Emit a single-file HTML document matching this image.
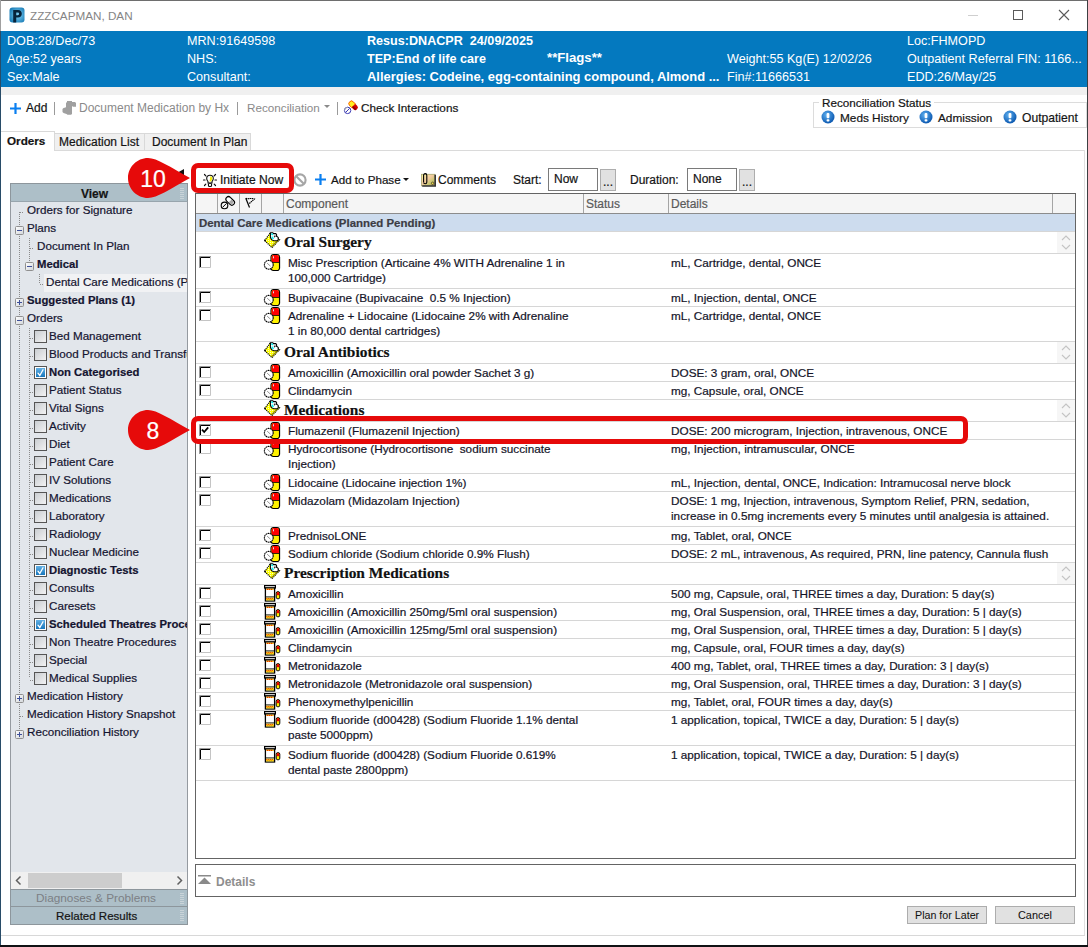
<!DOCTYPE html>
<html><head><meta charset="utf-8"><style>
html,body{margin:0;padding:0;width:1088px;height:947px;overflow:hidden;background:#fff}
body{position:relative;font-family:"Liberation Sans",sans-serif}
.t{position:absolute;white-space:nowrap;line-height:16px;font-family:"Liberation Sans",sans-serif;font-size:12px;-webkit-text-stroke:0.2px currentColor}
svg{overflow:visible}
</style></head><body>
<div style="position:absolute;left:0px;top:0px;width:1088px;height:947px;background:#fff"></div>
<div style="position:absolute;left:0px;top:0px;width:1088px;height:1px;background:#6e6e6e"></div>
<div style="position:absolute;left:0px;top:0px;width:1px;height:947px;background:#284c68"></div>
<div style="position:absolute;left:0px;top:0px;width:1px;height:31px;background:#a0a0a0"></div>
<div style="position:absolute;left:1087px;top:0px;width:1px;height:947px;background:#3c3f42"></div>
<div style="position:absolute;left:0px;top:945px;width:1088px;height:2px;background:#101214"></div>
<svg style="position:absolute;left:9px;top:7px;" width="16" height="16" viewBox="0 0 16 16"><defs><radialGradient id="pg" cx="55%" cy="50%" r="60%"><stop offset="0" stop-color="#7fd0f5"/><stop offset="1" stop-color="#1d7fb8"/></radialGradient></defs><rect x="0.5" y="0.5" width="15" height="15" rx="3" fill="url(#pg)"/><path d="M4.2 3h4.8c2.4 0 3.8 1.4 3.8 3.7S11.4 10.6 9 10.6H7.2v5H4.2z M7.2 5.4v2.9h1.6c0.9 0 1.3-0.6 1.3-1.45S9.7 5.4 8.8 5.4z" fill="#06223a"/></svg>
<div class="t" style="left:30px;top:8px;font-size:11.7px;color:#858585;font-family:'Liberation Sans', sans-serif;-webkit-text-stroke:0;">ZZZCAPMAN, DAN</div>
<div style="position:absolute;left:968px;top:15px;width:10px;height:1px;background:#cfcfcf"></div>
<div style="position:absolute;left:1013px;top:10px;width:10px;height:10px;border:1px solid #5a5a5a;box-sizing:border-box"></div>
<svg style="position:absolute;left:1058px;top:9px;" width="12" height="12" viewBox="0 0 12 12"><path d="M1 1L11 11M11 1L1 11" stroke="#5a5a5a" stroke-width="1.1"/></svg>
<div style="position:absolute;left:1px;top:31px;width:1086px;height:56px;background:#0479bf"></div>
<div class="t" style="left:7px;top:33px;font-size:12.6px;color:#ffffff;font-family:'Liberation Sans', sans-serif;-webkit-text-stroke:0;">DOB:28/Dec/73</div>
<div class="t" style="left:7px;top:51px;font-size:12.6px;color:#ffffff;font-family:'Liberation Sans', sans-serif;-webkit-text-stroke:0;">Age:52 years</div>
<div class="t" style="left:7px;top:69px;font-size:12.6px;color:#ffffff;font-family:'Liberation Sans', sans-serif;-webkit-text-stroke:0;">Sex:Male</div>
<div class="t" style="left:187px;top:33px;font-size:12.6px;color:#ffffff;font-family:'Liberation Sans', sans-serif;-webkit-text-stroke:0;">MRN:91649598</div>
<div class="t" style="left:187px;top:51px;font-size:12.6px;color:#ffffff;font-family:'Liberation Sans', sans-serif;-webkit-text-stroke:0;">NHS:</div>
<div class="t" style="left:187px;top:69px;font-size:12.6px;color:#ffffff;font-family:'Liberation Sans', sans-serif;-webkit-text-stroke:0;">Consultant:</div>
<div class="t" style="left:367px;top:33px;font-size:12.6px;font-weight:700;color:#ffffff;font-family:'Liberation Sans', sans-serif;-webkit-text-stroke:0;">Resus:DNACPR&nbsp; 24/09/2025</div>
<div class="t" style="left:367px;top:51px;font-size:12.6px;font-weight:700;color:#ffffff;font-family:'Liberation Sans', sans-serif;-webkit-text-stroke:0;">TEP:End of life care</div>
<div class="t" style="left:547px;top:50px;font-size:13.2px;font-weight:700;color:#ffffff;font-family:'Liberation Sans', sans-serif;-webkit-text-stroke:0;">**Flags**</div>
<div class="t" style="left:367px;top:69px;font-size:12.95px;font-weight:700;color:#ffffff;font-family:'Liberation Sans', sans-serif;-webkit-text-stroke:0;">Allergies: Codeine, egg-containing compound, Almond ...</div>
<div class="t" style="left:727px;top:51px;font-size:12.6px;color:#ffffff;font-family:'Liberation Sans', sans-serif;-webkit-text-stroke:0;">Weight:55 Kg(E) 12/02/26</div>
<div class="t" style="left:727px;top:69px;font-size:12.6px;color:#ffffff;font-family:'Liberation Sans', sans-serif;-webkit-text-stroke:0;">Fin#:11666531</div>
<div class="t" style="left:907px;top:33px;font-size:12.6px;color:#ffffff;font-family:'Liberation Sans', sans-serif;-webkit-text-stroke:0;">Loc:FHMOPD</div>
<div class="t" style="left:907px;top:51px;font-size:12.6px;color:#ffffff;font-family:'Liberation Sans', sans-serif;-webkit-text-stroke:0;">Outpatient Referral FIN: 1166...</div>
<div class="t" style="left:907px;top:69px;font-size:12.6px;color:#ffffff;font-family:'Liberation Sans', sans-serif;-webkit-text-stroke:0;">EDD:26/May/25</div>
<div style="position:absolute;left:1px;top:87px;width:1086px;height:8px;background:#f0f0f0"></div>
<svg style="position:absolute;left:10px;top:103px;" width="11" height="11" viewBox="0 0 11 11"><path d="M4.4 0h2.2v4.4H11v2.2H6.6V11H4.4V6.6H0V4.4h4.4z" fill="#0a7ff0"/></svg>
<div class="t" style="left:26px;top:100px;font-size:12px;color:#141414;font-family:'Liberation Sans', sans-serif;">Add</div>
<div style="position:absolute;left:54px;top:102px;width:1px;height:13px;background:#9a9a9a"></div>
<svg style="position:absolute;left:61px;top:100px;" width="16" height="16" viewBox="0 0 16 16"><path d="M6 1h5v1h3l1 1v3.7h-3l-1-0.7v8l-1 0.7H6.5l-1-0.7-3-1-1-1V9l1-1 2-0.5 0.5-0.5V3l1-1z" fill="#a0a0a0"/></svg>
<div class="t" style="left:79px;top:100px;font-size:12px;color:#8a8a8a;font-family:'Liberation Sans', sans-serif;-webkit-text-stroke:0;">Document Medication by Hx</div>
<div style="position:absolute;left:237px;top:102px;width:1px;height:13px;background:#9a9a9a"></div>
<div class="t" style="left:247px;top:100px;font-size:11.7px;color:#8a8a8a;font-family:'Liberation Sans', sans-serif;-webkit-text-stroke:0;">Reconciliation</div>
<svg style="position:absolute;left:324px;top:105px;" width="6" height="4" viewBox="0 0 6 4"><path d="M0 0h6L3 3z" fill="#8a8a8a"/></svg>
<div style="position:absolute;left:337px;top:102px;width:1px;height:13px;background:#9a9a9a"></div>
<svg style="position:absolute;left:343px;top:100px;" width="16" height="16" viewBox="0 0 16 16"><g transform="rotate(45 10.2 5.4)"><rect x="5.2" y="2.8" width="10.4" height="5.2" rx="2.4" fill="#d00000"/><path d="M7.6 2.8h3v5.2h-3a2.4 2.4 0 0 1-2.4-2.4v-0.4a2.4 2.4 0 0 1 2.4-2.4z" fill="#ffee22" stroke="#ff6a00" stroke-width="0.9"/><path d="M10.6 6.5h4.6" stroke="#8a0000" stroke-width="1.4"/></g><circle cx="4.6" cy="10.4" r="3.2" fill="#fff" stroke="#3a3ab4" stroke-width="1"/><path d="M1.6 10.4a3 3 0 0 1 3-3" stroke="#aaa" stroke-width="1" fill="none"/><path d="M2.6 12.4l4-4" stroke="#3a3ab4" stroke-width="1"/></svg>
<div class="t" style="left:361px;top:100px;font-size:11.75px;color:#141414;font-family:'Liberation Sans', sans-serif;">Check Interactions</div>
<div style="position:absolute;left:813px;top:102px;width:274px;height:26px;border:1px solid #dcdcdc;box-sizing:border-box"></div>
<div class="t" style="left:819px;top:95px;padding:0 3px;background:#fff;font-size:11.7px;color:#141414">Reconciliation Status</div>
<svg style="position:absolute;left:821px;top:110px;" width="14" height="14" viewBox="0 0 14 14"><defs><radialGradient id="eg" cx="40%" cy="35%" r="65%"><stop offset="0" stop-color="#5fb0f0"/><stop offset="1" stop-color="#0b58b0"/></radialGradient></defs><circle cx="7" cy="7" r="6.5" fill="url(#eg)"/><rect x="5.6" y="3" width="2.8" height="5.2" rx="1" fill="#fff"/><rect x="5.6" y="9.2" width="2.8" height="2.4" rx="0.8" fill="#fff"/></svg>
<svg style="position:absolute;left:919px;top:110px;" width="14" height="14" viewBox="0 0 14 14"><defs><radialGradient id="eg" cx="40%" cy="35%" r="65%"><stop offset="0" stop-color="#5fb0f0"/><stop offset="1" stop-color="#0b58b0"/></radialGradient></defs><circle cx="7" cy="7" r="6.5" fill="url(#eg)"/><rect x="5.6" y="3" width="2.8" height="5.2" rx="1" fill="#fff"/><rect x="5.6" y="9.2" width="2.8" height="2.4" rx="0.8" fill="#fff"/></svg>
<svg style="position:absolute;left:1003px;top:110px;" width="14" height="14" viewBox="0 0 14 14"><defs><radialGradient id="eg" cx="40%" cy="35%" r="65%"><stop offset="0" stop-color="#5fb0f0"/><stop offset="1" stop-color="#0b58b0"/></radialGradient></defs><circle cx="7" cy="7" r="6.5" fill="url(#eg)"/><rect x="5.6" y="3" width="2.8" height="5.2" rx="1" fill="#fff"/><rect x="5.6" y="9.2" width="2.8" height="2.4" rx="0.8" fill="#fff"/></svg>
<div class="t" style="left:840px;top:110px;font-size:11.8px;color:#141414;font-family:'Liberation Sans', sans-serif;">Meds History</div>
<div class="t" style="left:938px;top:110px;font-size:11.8px;color:#141414;font-family:'Liberation Sans', sans-serif;">Admission</div>
<div class="t" style="left:1022px;top:110px;font-size:12.1px;color:#141414;font-family:'Liberation Sans', sans-serif;">Outpatient</div>
<div style="position:absolute;left:1px;top:150px;width:1084px;height:1px;background:#dadada"></div>
<div style="position:absolute;left:1084px;top:150px;width:1px;height:786px;background:#e0e0e0"></div>
<div style="position:absolute;left:1px;top:935px;width:1084px;height:1px;background:#d8d8d8"></div>
<div style="position:absolute;left:54px;top:133px;width:91px;height:17px;background:#f0f0f0;border:1px solid #d9d9d9;border-bottom:none;box-sizing:border-box"></div>
<div style="position:absolute;left:144px;top:133px;width:107px;height:17px;background:#f0f0f0;border:1px solid #d9d9d9;border-bottom:none;box-sizing:border-box"></div>
<div style="position:absolute;left:1px;top:131px;width:54px;height:20px;background:#fff;border:1px solid #d9d9d9;border-bottom:none;border-left:none;box-sizing:border-box"></div>
<div class="t" style="left:7px;top:133px;font-size:11.7px;font-weight:700;color:#141414;font-family:'Liberation Sans', sans-serif;">Orders</div>
<div class="t" style="left:59px;top:134px;font-size:12px;color:#141414;font-family:'Liberation Sans', sans-serif;">Medication List</div>
<div class="t" style="left:152px;top:134px;font-size:12px;color:#141414;font-family:'Liberation Sans', sans-serif;">Document In Plan</div>
<div style="position:absolute;left:10px;top:183px;width:178px;height:742px;background:#e2e6eb;border:1px solid #959aa0;box-sizing:border-box"></div>
<div style="position:absolute;left:10px;top:183px;width:178px;height:19px;background:#adbfc8;border:1px solid #8d969c;border-bottom:1px solid #98a5ad;box-sizing:border-box"></div>
<div class="t" style="left:81px;top:186px;font-size:12px;font-weight:700;color:#141414;font-family:'Liberation Sans', sans-serif;">View</div>
<div style="position:absolute;left:180px;top:188px;width:4px;height:1px;background:#c9d3d8"></div>
<div style="position:absolute;left:180px;top:190px;width:4px;height:1px;background:#c9d3d8"></div>
<div style="position:absolute;left:180px;top:192px;width:4px;height:1px;background:#c9d3d8"></div>
<div style="position:absolute;left:180px;top:194px;width:4px;height:1px;background:#c9d3d8"></div>
<div style="position:absolute;left:180px;top:196px;width:4px;height:1px;background:#c9d3d8"></div>
<div style="position:absolute;left:180px;top:198px;width:4px;height:1px;background:#c9d3d8"></div>
<svg style="position:absolute;left:176px;top:169px;" width="8" height="9" viewBox="0 0 8 9"><path d="M8 0V9L0 4.5z" fill="#111"/></svg>
<div style="position:absolute;left:11px;top:202px;width:176px;height:670px;overflow:hidden">
<div style="position:absolute;left:33px;top:72px;width:144px;height:18px;background:#f1f2f4"></div>
<div style="position:absolute;left:8px;top:10px;width:1px;height:520px;background-image:repeating-linear-gradient(to bottom,#8a8a8a 0 1px,transparent 1px 2px)"></div>
<div style="position:absolute;left:18px;top:36px;width:1px;height:24px;background-image:repeating-linear-gradient(to bottom,#8a8a8a 0 1px,transparent 1px 2px)"></div>
<div style="position:absolute;left:28px;top:72px;width:1px;height:10px;background-image:repeating-linear-gradient(to bottom,#8a8a8a 0 1px,transparent 1px 2px)"></div>
<div style="position:absolute;left:18px;top:126px;width:1px;height:350px;background-image:repeating-linear-gradient(to bottom,#8a8a8a 0 1px,transparent 1px 2px)"></div>
<div style="position:absolute;left:9px;top:10px;width:4px;height:1px;background-image:repeating-linear-gradient(to right,#8a8a8a 0 1px,transparent 1px 2px)"></div>
<div class="t" style="left:16px;top:0px;color:#141430;font-size:11.65px;">Orders for Signature</div>
<svg style="position:absolute;left:4px;top:24px" width="9" height="9" viewBox="0 0 9 9"><defs><linearGradient id="bxg" x1="0" y1="0" x2="1" y2="1"><stop offset="0" stop-color="#fff"/><stop offset="1" stop-color="#d0d4d8"/></linearGradient></defs><rect x="0.5" y="0.5" width="8" height="8" rx="1" fill="url(#bxg)" stroke="#8f8f8f"/><path d="M2 4.5h5" stroke="#3d4f9a" stroke-width="1"/></svg>
<div class="t" style="left:16px;top:18px;color:#141430;font-size:11.65px;">Plans</div>
<div style="position:absolute;left:19px;top:46px;width:4px;height:1px;background-image:repeating-linear-gradient(to right,#8a8a8a 0 1px,transparent 1px 2px)"></div>
<div class="t" style="left:26px;top:36px;color:#141430;font-size:11.65px;">Document In Plan</div>
<svg style="position:absolute;left:14px;top:60px" width="9" height="9" viewBox="0 0 9 9"><defs><linearGradient id="bxg" x1="0" y1="0" x2="1" y2="1"><stop offset="0" stop-color="#fff"/><stop offset="1" stop-color="#d0d4d8"/></linearGradient></defs><rect x="0.5" y="0.5" width="8" height="8" rx="1" fill="url(#bxg)" stroke="#8f8f8f"/><path d="M2 4.5h5" stroke="#3d4f9a" stroke-width="1"/></svg>
<div class="t" style="left:26px;top:54px;color:#141430;font-weight:700;font-size:11.3px;">Medical</div>
<div style="position:absolute;left:29px;top:82px;width:4px;height:1px;background-image:repeating-linear-gradient(to right,#8a8a8a 0 1px,transparent 1px 2px)"></div>
<div class="t" style="left:35px;top:72px;color:#141430;font-size:11.65px;">Dental Care Medications (Planned Pending)</div>
<svg style="position:absolute;left:4px;top:96px" width="9" height="9" viewBox="0 0 9 9"><defs><linearGradient id="bxg" x1="0" y1="0" x2="1" y2="1"><stop offset="0" stop-color="#fff"/><stop offset="1" stop-color="#d0d4d8"/></linearGradient></defs><rect x="0.5" y="0.5" width="8" height="8" rx="1" fill="url(#bxg)" stroke="#8f8f8f"/><path d="M2 4.5h5" stroke="#3d4f9a" stroke-width="1"/><path d="M4.5 2v5" stroke="#3d4f9a" stroke-width="1"/></svg>
<div class="t" style="left:16px;top:90px;color:#141430;font-weight:700;font-size:11.3px;">Suggested Plans (1)</div>
<svg style="position:absolute;left:4px;top:114px" width="9" height="9" viewBox="0 0 9 9"><defs><linearGradient id="bxg" x1="0" y1="0" x2="1" y2="1"><stop offset="0" stop-color="#fff"/><stop offset="1" stop-color="#d0d4d8"/></linearGradient></defs><rect x="0.5" y="0.5" width="8" height="8" rx="1" fill="url(#bxg)" stroke="#8f8f8f"/><path d="M2 4.5h5" stroke="#3d4f9a" stroke-width="1"/></svg>
<div class="t" style="left:16px;top:108px;color:#141430;font-size:11.65px;">Orders</div>
<div style="position:absolute;left:19px;top:136px;width:4px;height:1px;background-image:repeating-linear-gradient(to right,#8a8a8a 0 1px,transparent 1px 2px)"></div>
<svg style="position:absolute;left:23px;top:128px" width="13" height="13" viewBox="0 0 13 13"><defs><linearGradient id="cbg" x1="0" y1="0" x2="1" y2="1"><stop offset="0" stop-color="#c8ccd0"/><stop offset="1" stop-color="#f4f4f4"/></linearGradient></defs><rect x="0.5" y="0.5" width="12" height="12" fill="url(#cbg)" stroke="#555"/></svg>
<div class="t" style="left:38px;top:126px;color:#141430;font-size:11.65px;">Bed Management</div>
<div style="position:absolute;left:19px;top:154px;width:4px;height:1px;background-image:repeating-linear-gradient(to right,#8a8a8a 0 1px,transparent 1px 2px)"></div>
<svg style="position:absolute;left:23px;top:146px" width="13" height="13" viewBox="0 0 13 13"><defs><linearGradient id="cbg" x1="0" y1="0" x2="1" y2="1"><stop offset="0" stop-color="#c8ccd0"/><stop offset="1" stop-color="#f4f4f4"/></linearGradient></defs><rect x="0.5" y="0.5" width="12" height="12" fill="url(#cbg)" stroke="#555"/></svg>
<div class="t" style="left:38px;top:144px;color:#141430;font-size:11.65px;">Blood Products and Transfusions</div>
<div style="position:absolute;left:19px;top:172px;width:4px;height:1px;background-image:repeating-linear-gradient(to right,#8a8a8a 0 1px,transparent 1px 2px)"></div>
<svg style="position:absolute;left:23px;top:164px" width="13" height="13" viewBox="0 0 13 13"><rect x="0.5" y="0.5" width="12" height="12" fill="#fff" stroke="#555"/><defs><linearGradient id="cbb" x1="0" y1="0" x2="0" y2="1"><stop offset="0" stop-color="#62b0e4"/><stop offset="1" stop-color="#1877bd"/></linearGradient></defs><rect x="2" y="2" width="9" height="9" fill="url(#cbb)"/><path d="M4 7.2l1.8 2.3L9 3.8" stroke="#fff" stroke-width="1.3" fill="none" stroke-linecap="round"/></svg>
<div class="t" style="left:38px;top:162px;color:#141430;font-weight:700;font-size:11.3px;">Non Categorised</div>
<div style="position:absolute;left:19px;top:190px;width:4px;height:1px;background-image:repeating-linear-gradient(to right,#8a8a8a 0 1px,transparent 1px 2px)"></div>
<svg style="position:absolute;left:23px;top:182px" width="13" height="13" viewBox="0 0 13 13"><defs><linearGradient id="cbg" x1="0" y1="0" x2="1" y2="1"><stop offset="0" stop-color="#c8ccd0"/><stop offset="1" stop-color="#f4f4f4"/></linearGradient></defs><rect x="0.5" y="0.5" width="12" height="12" fill="url(#cbg)" stroke="#555"/></svg>
<div class="t" style="left:38px;top:180px;color:#141430;font-size:11.65px;">Patient Status</div>
<div style="position:absolute;left:19px;top:208px;width:4px;height:1px;background-image:repeating-linear-gradient(to right,#8a8a8a 0 1px,transparent 1px 2px)"></div>
<svg style="position:absolute;left:23px;top:200px" width="13" height="13" viewBox="0 0 13 13"><defs><linearGradient id="cbg" x1="0" y1="0" x2="1" y2="1"><stop offset="0" stop-color="#c8ccd0"/><stop offset="1" stop-color="#f4f4f4"/></linearGradient></defs><rect x="0.5" y="0.5" width="12" height="12" fill="url(#cbg)" stroke="#555"/></svg>
<div class="t" style="left:38px;top:198px;color:#141430;font-size:11.65px;">Vital Signs</div>
<div style="position:absolute;left:19px;top:226px;width:4px;height:1px;background-image:repeating-linear-gradient(to right,#8a8a8a 0 1px,transparent 1px 2px)"></div>
<svg style="position:absolute;left:23px;top:218px" width="13" height="13" viewBox="0 0 13 13"><defs><linearGradient id="cbg" x1="0" y1="0" x2="1" y2="1"><stop offset="0" stop-color="#c8ccd0"/><stop offset="1" stop-color="#f4f4f4"/></linearGradient></defs><rect x="0.5" y="0.5" width="12" height="12" fill="url(#cbg)" stroke="#555"/></svg>
<div class="t" style="left:38px;top:216px;color:#141430;font-size:11.65px;">Activity</div>
<div style="position:absolute;left:19px;top:244px;width:4px;height:1px;background-image:repeating-linear-gradient(to right,#8a8a8a 0 1px,transparent 1px 2px)"></div>
<svg style="position:absolute;left:23px;top:236px" width="13" height="13" viewBox="0 0 13 13"><defs><linearGradient id="cbg" x1="0" y1="0" x2="1" y2="1"><stop offset="0" stop-color="#c8ccd0"/><stop offset="1" stop-color="#f4f4f4"/></linearGradient></defs><rect x="0.5" y="0.5" width="12" height="12" fill="url(#cbg)" stroke="#555"/></svg>
<div class="t" style="left:38px;top:234px;color:#141430;font-size:11.65px;">Diet</div>
<div style="position:absolute;left:19px;top:262px;width:4px;height:1px;background-image:repeating-linear-gradient(to right,#8a8a8a 0 1px,transparent 1px 2px)"></div>
<svg style="position:absolute;left:23px;top:254px" width="13" height="13" viewBox="0 0 13 13"><defs><linearGradient id="cbg" x1="0" y1="0" x2="1" y2="1"><stop offset="0" stop-color="#c8ccd0"/><stop offset="1" stop-color="#f4f4f4"/></linearGradient></defs><rect x="0.5" y="0.5" width="12" height="12" fill="url(#cbg)" stroke="#555"/></svg>
<div class="t" style="left:38px;top:252px;color:#141430;font-size:11.65px;">Patient Care</div>
<div style="position:absolute;left:19px;top:280px;width:4px;height:1px;background-image:repeating-linear-gradient(to right,#8a8a8a 0 1px,transparent 1px 2px)"></div>
<svg style="position:absolute;left:23px;top:272px" width="13" height="13" viewBox="0 0 13 13"><defs><linearGradient id="cbg" x1="0" y1="0" x2="1" y2="1"><stop offset="0" stop-color="#c8ccd0"/><stop offset="1" stop-color="#f4f4f4"/></linearGradient></defs><rect x="0.5" y="0.5" width="12" height="12" fill="url(#cbg)" stroke="#555"/></svg>
<div class="t" style="left:38px;top:270px;color:#141430;font-size:11.65px;">IV Solutions</div>
<div style="position:absolute;left:19px;top:298px;width:4px;height:1px;background-image:repeating-linear-gradient(to right,#8a8a8a 0 1px,transparent 1px 2px)"></div>
<svg style="position:absolute;left:23px;top:290px" width="13" height="13" viewBox="0 0 13 13"><defs><linearGradient id="cbg" x1="0" y1="0" x2="1" y2="1"><stop offset="0" stop-color="#c8ccd0"/><stop offset="1" stop-color="#f4f4f4"/></linearGradient></defs><rect x="0.5" y="0.5" width="12" height="12" fill="url(#cbg)" stroke="#555"/></svg>
<div class="t" style="left:38px;top:288px;color:#141430;font-size:11.65px;">Medications</div>
<div style="position:absolute;left:19px;top:316px;width:4px;height:1px;background-image:repeating-linear-gradient(to right,#8a8a8a 0 1px,transparent 1px 2px)"></div>
<svg style="position:absolute;left:23px;top:308px" width="13" height="13" viewBox="0 0 13 13"><defs><linearGradient id="cbg" x1="0" y1="0" x2="1" y2="1"><stop offset="0" stop-color="#c8ccd0"/><stop offset="1" stop-color="#f4f4f4"/></linearGradient></defs><rect x="0.5" y="0.5" width="12" height="12" fill="url(#cbg)" stroke="#555"/></svg>
<div class="t" style="left:38px;top:306px;color:#141430;font-size:11.65px;">Laboratory</div>
<div style="position:absolute;left:19px;top:334px;width:4px;height:1px;background-image:repeating-linear-gradient(to right,#8a8a8a 0 1px,transparent 1px 2px)"></div>
<svg style="position:absolute;left:23px;top:326px" width="13" height="13" viewBox="0 0 13 13"><defs><linearGradient id="cbg" x1="0" y1="0" x2="1" y2="1"><stop offset="0" stop-color="#c8ccd0"/><stop offset="1" stop-color="#f4f4f4"/></linearGradient></defs><rect x="0.5" y="0.5" width="12" height="12" fill="url(#cbg)" stroke="#555"/></svg>
<div class="t" style="left:38px;top:324px;color:#141430;font-size:11.65px;">Radiology</div>
<div style="position:absolute;left:19px;top:352px;width:4px;height:1px;background-image:repeating-linear-gradient(to right,#8a8a8a 0 1px,transparent 1px 2px)"></div>
<svg style="position:absolute;left:23px;top:344px" width="13" height="13" viewBox="0 0 13 13"><defs><linearGradient id="cbg" x1="0" y1="0" x2="1" y2="1"><stop offset="0" stop-color="#c8ccd0"/><stop offset="1" stop-color="#f4f4f4"/></linearGradient></defs><rect x="0.5" y="0.5" width="12" height="12" fill="url(#cbg)" stroke="#555"/></svg>
<div class="t" style="left:38px;top:342px;color:#141430;font-size:11.65px;">Nuclear Medicine</div>
<div style="position:absolute;left:19px;top:370px;width:4px;height:1px;background-image:repeating-linear-gradient(to right,#8a8a8a 0 1px,transparent 1px 2px)"></div>
<svg style="position:absolute;left:23px;top:362px" width="13" height="13" viewBox="0 0 13 13"><rect x="0.5" y="0.5" width="12" height="12" fill="#fff" stroke="#555"/><defs><linearGradient id="cbb" x1="0" y1="0" x2="0" y2="1"><stop offset="0" stop-color="#62b0e4"/><stop offset="1" stop-color="#1877bd"/></linearGradient></defs><rect x="2" y="2" width="9" height="9" fill="url(#cbb)"/><path d="M4 7.2l1.8 2.3L9 3.8" stroke="#fff" stroke-width="1.3" fill="none" stroke-linecap="round"/></svg>
<div class="t" style="left:38px;top:360px;color:#141430;font-weight:700;font-size:11.3px;">Diagnostic Tests</div>
<div style="position:absolute;left:19px;top:388px;width:4px;height:1px;background-image:repeating-linear-gradient(to right,#8a8a8a 0 1px,transparent 1px 2px)"></div>
<svg style="position:absolute;left:23px;top:380px" width="13" height="13" viewBox="0 0 13 13"><defs><linearGradient id="cbg" x1="0" y1="0" x2="1" y2="1"><stop offset="0" stop-color="#c8ccd0"/><stop offset="1" stop-color="#f4f4f4"/></linearGradient></defs><rect x="0.5" y="0.5" width="12" height="12" fill="url(#cbg)" stroke="#555"/></svg>
<div class="t" style="left:38px;top:378px;color:#141430;font-size:11.65px;">Consults</div>
<div style="position:absolute;left:19px;top:406px;width:4px;height:1px;background-image:repeating-linear-gradient(to right,#8a8a8a 0 1px,transparent 1px 2px)"></div>
<svg style="position:absolute;left:23px;top:398px" width="13" height="13" viewBox="0 0 13 13"><defs><linearGradient id="cbg" x1="0" y1="0" x2="1" y2="1"><stop offset="0" stop-color="#c8ccd0"/><stop offset="1" stop-color="#f4f4f4"/></linearGradient></defs><rect x="0.5" y="0.5" width="12" height="12" fill="url(#cbg)" stroke="#555"/></svg>
<div class="t" style="left:38px;top:396px;color:#141430;font-size:11.65px;">Caresets</div>
<div style="position:absolute;left:19px;top:424px;width:4px;height:1px;background-image:repeating-linear-gradient(to right,#8a8a8a 0 1px,transparent 1px 2px)"></div>
<svg style="position:absolute;left:23px;top:416px" width="13" height="13" viewBox="0 0 13 13"><rect x="0.5" y="0.5" width="12" height="12" fill="#fff" stroke="#555"/><defs><linearGradient id="cbb" x1="0" y1="0" x2="0" y2="1"><stop offset="0" stop-color="#62b0e4"/><stop offset="1" stop-color="#1877bd"/></linearGradient></defs><rect x="2" y="2" width="9" height="9" fill="url(#cbb)"/><path d="M4 7.2l1.8 2.3L9 3.8" stroke="#fff" stroke-width="1.3" fill="none" stroke-linecap="round"/></svg>
<div class="t" style="left:38px;top:414px;color:#141430;font-weight:700;font-size:11.3px;">Scheduled Theatres Procedures</div>
<div style="position:absolute;left:19px;top:442px;width:4px;height:1px;background-image:repeating-linear-gradient(to right,#8a8a8a 0 1px,transparent 1px 2px)"></div>
<svg style="position:absolute;left:23px;top:434px" width="13" height="13" viewBox="0 0 13 13"><defs><linearGradient id="cbg" x1="0" y1="0" x2="1" y2="1"><stop offset="0" stop-color="#c8ccd0"/><stop offset="1" stop-color="#f4f4f4"/></linearGradient></defs><rect x="0.5" y="0.5" width="12" height="12" fill="url(#cbg)" stroke="#555"/></svg>
<div class="t" style="left:38px;top:432px;color:#141430;font-size:11.65px;">Non Theatre Procedures</div>
<div style="position:absolute;left:19px;top:460px;width:4px;height:1px;background-image:repeating-linear-gradient(to right,#8a8a8a 0 1px,transparent 1px 2px)"></div>
<svg style="position:absolute;left:23px;top:452px" width="13" height="13" viewBox="0 0 13 13"><defs><linearGradient id="cbg" x1="0" y1="0" x2="1" y2="1"><stop offset="0" stop-color="#c8ccd0"/><stop offset="1" stop-color="#f4f4f4"/></linearGradient></defs><rect x="0.5" y="0.5" width="12" height="12" fill="url(#cbg)" stroke="#555"/></svg>
<div class="t" style="left:38px;top:450px;color:#141430;font-size:11.65px;">Special</div>
<div style="position:absolute;left:19px;top:478px;width:4px;height:1px;background-image:repeating-linear-gradient(to right,#8a8a8a 0 1px,transparent 1px 2px)"></div>
<svg style="position:absolute;left:23px;top:470px" width="13" height="13" viewBox="0 0 13 13"><defs><linearGradient id="cbg" x1="0" y1="0" x2="1" y2="1"><stop offset="0" stop-color="#c8ccd0"/><stop offset="1" stop-color="#f4f4f4"/></linearGradient></defs><rect x="0.5" y="0.5" width="12" height="12" fill="url(#cbg)" stroke="#555"/></svg>
<div class="t" style="left:38px;top:468px;color:#141430;font-size:11.65px;">Medical Supplies</div>
<svg style="position:absolute;left:4px;top:492px" width="9" height="9" viewBox="0 0 9 9"><defs><linearGradient id="bxg" x1="0" y1="0" x2="1" y2="1"><stop offset="0" stop-color="#fff"/><stop offset="1" stop-color="#d0d4d8"/></linearGradient></defs><rect x="0.5" y="0.5" width="8" height="8" rx="1" fill="url(#bxg)" stroke="#8f8f8f"/><path d="M2 4.5h5" stroke="#3d4f9a" stroke-width="1"/><path d="M4.5 2v5" stroke="#3d4f9a" stroke-width="1"/></svg>
<div class="t" style="left:16px;top:486px;color:#141430;font-size:11.65px;">Medication History</div>
<div style="position:absolute;left:9px;top:514px;width:4px;height:1px;background-image:repeating-linear-gradient(to right,#8a8a8a 0 1px,transparent 1px 2px)"></div>
<div class="t" style="left:16px;top:504px;color:#141430;font-size:11.65px;">Medication History Snapshot</div>
<svg style="position:absolute;left:4px;top:528px" width="9" height="9" viewBox="0 0 9 9"><defs><linearGradient id="bxg" x1="0" y1="0" x2="1" y2="1"><stop offset="0" stop-color="#fff"/><stop offset="1" stop-color="#d0d4d8"/></linearGradient></defs><rect x="0.5" y="0.5" width="8" height="8" rx="1" fill="url(#bxg)" stroke="#8f8f8f"/><path d="M2 4.5h5" stroke="#3d4f9a" stroke-width="1"/><path d="M4.5 2v5" stroke="#3d4f9a" stroke-width="1"/></svg>
<div class="t" style="left:16px;top:522px;color:#141430;font-size:11.65px;">Reconciliation History</div>
</div>
<div style="position:absolute;left:11px;top:872px;width:176px;height:17px;background:#f0f0f0"></div>
<div style="position:absolute;left:28px;top:873px;width:94px;height:15px;background:#cdcdcd"></div>
<svg style="position:absolute;left:15px;top:876px;" width="7" height="9" viewBox="0 0 7 9"><path d="M5.5 0.5L1.5 4.5L5.5 8.5" stroke="#606060" stroke-width="1.5" fill="none"/></svg>
<svg style="position:absolute;left:176px;top:876px;" width="7" height="9" viewBox="0 0 7 9"><path d="M1.5 0.5L5.5 4.5L1.5 8.5" stroke="#606060" stroke-width="1.5" fill="none"/></svg>
<div style="position:absolute;left:10px;top:889px;width:178px;height:18px;background:#adbfc8;border:1px solid #8d969c;border-width:1px 1px 1px 1.5px;box-sizing:border-box"></div>
<div style="position:absolute;left:10px;top:906px;width:178px;height:19px;background:#adbfc8;border:1px solid #8d969c;border-width:1px 1px 1px 1.5px;box-sizing:border-box"></div>
<div class="t" style="left:36px;top:890px;font-size:11.8px;color:#7c8085;font-family:'Liberation Sans', sans-serif;-webkit-text-stroke:0;">Diagnoses &amp; Problems</div>
<div class="t" style="left:56px;top:908px;font-size:11.5px;color:#141414;font-family:'Liberation Sans', sans-serif;">Related Results</div>
<div style="position:absolute;left:180px;top:893px;width:4px;height:1px;background:#c9d3d8"></div>
<div style="position:absolute;left:180px;top:895px;width:4px;height:1px;background:#c9d3d8"></div>
<div style="position:absolute;left:180px;top:897px;width:4px;height:1px;background:#c9d3d8"></div>
<div style="position:absolute;left:180px;top:899px;width:4px;height:1px;background:#c9d3d8"></div>
<div style="position:absolute;left:180px;top:901px;width:4px;height:1px;background:#c9d3d8"></div>
<div style="position:absolute;left:180px;top:903px;width:4px;height:1px;background:#c9d3d8"></div>
<div style="position:absolute;left:180px;top:910px;width:4px;height:1px;background:#c9d3d8"></div>
<div style="position:absolute;left:180px;top:912px;width:4px;height:1px;background:#c9d3d8"></div>
<div style="position:absolute;left:180px;top:914px;width:4px;height:1px;background:#c9d3d8"></div>
<div style="position:absolute;left:180px;top:916px;width:4px;height:1px;background:#c9d3d8"></div>
<div style="position:absolute;left:180px;top:918px;width:4px;height:1px;background:#c9d3d8"></div>
<div style="position:absolute;left:180px;top:920px;width:4px;height:1px;background:#c9d3d8"></div>
<svg style="position:absolute;left:203px;top:173px;" width="14" height="14" viewBox="0 0 14 14"><g stroke="#111" stroke-width="1.2" stroke-linecap="round"><path d="M0.5 7h1.5M12 7h1.5M1.5 1.5l1.3 1.3M12.5 1.5l-1.3 1.3M1.5 12.5l1.3-1.3M12.5 12.5l-1.3-1.3"/></g><path d="M7 2.3c-2 0-3.3 1.5-3.3 3.2 0 1.4 0.9 2.2 1.3 3.2v1.3h4V8.7c0.4-1 1.3-1.8 1.3-3.2 0-1.7-1.3-3.2-3.3-3.2z" fill="#fff" stroke="#111" stroke-width="1.1"/><path d="M7.3 3.2c1.2 0.3 2.3 1.2 2 2.6-0.2 1-0.8 1.6-1.2 2.6H6.6z" fill="#f3ee00"/><rect x="5.4" y="10.3" width="3.2" height="3.2" rx="1.3" fill="#fff" stroke="#111" stroke-width="1.1"/></svg>
<div class="t" style="left:220px;top:172px;font-size:12.1px;color:#141414;font-family:'Liberation Sans', sans-serif;">Initiate Now</div>
<svg style="position:absolute;left:293px;top:173px;" width="14" height="14" viewBox="0 0 14 14"><circle cx="7" cy="7" r="5.6" fill="none" stroke="#a6a6a6" stroke-width="2.1"/><path d="M3 3l8 8" stroke="#a6a6a6" stroke-width="2.1"/></svg>
<svg style="position:absolute;left:315px;top:174px;" width="11" height="11" viewBox="0 0 11 11"><path d="M4.4 0h2.2v4.4H11v2.2H6.6V11H4.4V6.6H0V4.4h4.4z" fill="#0a7ff0"/></svg>
<div class="t" style="left:331px;top:172px;font-size:11.6px;color:#141414;font-family:'Liberation Sans', sans-serif;">Add to Phase</div>
<svg style="position:absolute;left:403px;top:178px;" width="6" height="4" viewBox="0 0 6 4"><path d="M0 0h6L3 3z" fill="#141414"/></svg>
<svg style="position:absolute;left:421px;top:173px;" width="16" height="14" viewBox="0 0 16 14"><defs><linearGradient id="cmg" x1="0" y1="0" x2="1" y2="1"><stop offset="0" stop-color="#fbf7a0"/><stop offset="0.45" stop-color="#f3c9a0"/><stop offset="0.7" stop-color="#c8c870"/><stop offset="1" stop-color="#b08040"/></linearGradient></defs><rect x="0.5" y="1.3" width="13.5" height="11.5" fill="url(#cmg)" stroke="#a8a870" stroke-width="0.8"/><path d="M14.2 1.8v11.2H1.2" stroke="#353535" stroke-width="1.6" fill="none"/><circle cx="11.6" cy="10.3" r="1.2" fill="#f0e040" stroke="#333" stroke-width="0.7"/><path d="M2.6 9V2.2a1.6 1.6 0 0 1 3.2 0v7a1.6 1.6 0 0 1-3.2 0" stroke="#000" stroke-width="1.1" fill="none"/></svg>
<div class="t" style="left:438px;top:172px;font-size:12px;color:#141414;font-family:'Liberation Sans', sans-serif;">Comments</div>
<div class="t" style="left:513px;top:172px;font-size:12px;color:#141414;font-family:'Liberation Sans', sans-serif;">Start:</div>
<div style="position:absolute;left:548px;top:168px;width:50px;height:23px;background:#fff;border:1px solid #7a7a7a;box-sizing:border-box"></div>
<div class="t" style="left:554px;top:171px;font-size:12px;color:#141414;font-family:'Liberation Sans', sans-serif;">Now</div>
<div style="position:absolute;left:600px;top:169px;width:16px;height:22px;background:#e1e1e1;border:1px solid #adadad;box-sizing:border-box"></div>
<div class="t" style="left:603px;top:174px;font-size:12px;color:#141414;font-family:'Liberation Sans', sans-serif;">...</div>
<div class="t" style="left:630px;top:172px;font-size:12px;color:#141414;font-family:'Liberation Sans', sans-serif;">Duration:</div>
<div style="position:absolute;left:687px;top:168px;width:50px;height:23px;background:#fff;border:1px solid #7a7a7a;box-sizing:border-box"></div>
<div class="t" style="left:693px;top:171px;font-size:12px;color:#141414;font-family:'Liberation Sans', sans-serif;">None</div>
<div style="position:absolute;left:739px;top:169px;width:16px;height:22px;background:#e1e1e1;border:1px solid #adadad;box-sizing:border-box"></div>
<div class="t" style="left:742px;top:174px;font-size:12px;color:#141414;font-family:'Liberation Sans', sans-serif;">...</div>
<div style="position:absolute;left:195px;top:193px;width:881px;height:666px;background:#fff;border:1px solid #646464;box-sizing:border-box"></div>
<div style="position:absolute;left:196px;top:194px;width:879px;height:19px;background:#f5f5f5"></div>
<div style="position:absolute;left:196px;top:213px;width:879px;height:1px;background:#8c8c8c"></div>
<div style="position:absolute;left:217px;top:194px;width:1px;height:19px;background:#a5a5a5"></div>
<div style="position:absolute;left:239px;top:194px;width:1px;height:19px;background:#a5a5a5"></div>
<div style="position:absolute;left:261px;top:194px;width:1px;height:19px;background:#a5a5a5"></div>
<div style="position:absolute;left:283px;top:194px;width:1px;height:19px;background:#a5a5a5"></div>
<div style="position:absolute;left:583px;top:194px;width:1px;height:19px;background:#a5a5a5"></div>
<div style="position:absolute;left:668px;top:194px;width:1px;height:19px;background:#a5a5a5"></div>
<div style="position:absolute;left:1052px;top:194px;width:1px;height:19px;background:#a5a5a5"></div>
<div class="t" style="left:286px;top:196px;font-size:12px;color:#5a5a5a;font-family:'Liberation Sans', sans-serif;">Component</div>
<div class="t" style="left:586px;top:196px;font-size:12px;color:#5a5a5a;font-family:'Liberation Sans', sans-serif;">Status</div>
<div class="t" style="left:671px;top:196px;font-size:12px;color:#5a5a5a;font-family:'Liberation Sans', sans-serif;">Details</div>
<svg style="position:absolute;left:220px;top:195px;" width="17" height="15" viewBox="0 0 17 15"><g transform="rotate(45 10.2 5.9)"><rect x="5.2" y="3.3" width="10" height="5.2" rx="2.6" fill="#fff" stroke="#000" stroke-width="1.1"/><path d="M10.2 3.9h2.4a2.2 2.2 0 0 1 0 4h-2.4z" fill="#a8a8a8"/></g><circle cx="4.5" cy="10.4" r="3.3" fill="#f4f4f4" stroke="#000" stroke-width="1.1"/><path d="M2.6 12.3l3.8-3.8" stroke="#000" stroke-width="1"/></svg>
<svg style="position:absolute;left:244px;top:196px;" width="13" height="14" viewBox="0 0 13 14"><path d="M1.8 2.2L5.5 11.5" stroke="#000" stroke-width="1.2"/><path d="M1.8 2.2c2.4 1.4 4.4-0.6 8.6 0.8L5.2 7.6" stroke="#000" stroke-width="1.1" fill="none" stroke-dasharray="1.5 0.5"/></svg>
<div style="position:absolute;left:196px;top:214px;width:879px;height:17px;background:#cddcee"></div>
<div style="position:absolute;left:196px;top:231px;width:879px;height:1px;background:#d6d6d6"></div>
<div class="t" style="left:199px;top:215px;font-size:11.45px;font-weight:700;color:#3c3c44;font-family:'Liberation Sans', sans-serif;">Dental Care Medications (Planned Pending)</div>
<svg style="position:absolute;left:264px;top:232px;" width="17" height="17" viewBox="0 0 17 17"><defs><pattern id="chk" width="2" height="2" patternUnits="userSpaceOnUse"><rect width="2" height="2" fill="#ffff00"/><rect width="1" height="1" fill="#ffffc8"/></pattern></defs><path d="M0.6 8.6L5.8 1.6L15.6 7.6L8 15.6Z" fill="url(#chk)" stroke="#000" stroke-width="1.1" stroke-dasharray="1.2 0.8"/><path d="M0 8.3h2" stroke="#000" stroke-width="1.1"/><path d="M15.2 7.9L8.2 15.1L7.2 14L13.8 7.2z" fill="#a09a00"/><path d="M6.4 0.8h2.4l0.8 0.8h2.2l0.8 1v1.6l1.6 1.2v2.4l-1 1H9.6l-2-1.2l-1.2-2z" fill="#fff" stroke="#000" stroke-width="1.1"/><path d="M7.4 1.6l1.6 1.4M7.8 4.6l1.6 2.4" stroke="#00f0f0" stroke-width="1.5"/><path d="M10.4 3.6v1.8M12 3.4v1.6" stroke="#000" stroke-width="0.9"/></svg>
<div class="t" style="left:284px;top:234px;font-size:15.4px;font-weight:700;color:#111;font-family:'Liberation Serif', serif;">Oral Surgery</div>
<div style="position:absolute;left:1057px;top:232px;width:18px;height:21px;background:#f6f6f6"></div>
<svg style="position:absolute;left:1061px;top:235px;" width="10" height="15" viewBox="0 0 10 15"><path d="M1 5l4-4 4 4M1 10l4 4 4-4" stroke="#c4c4c4" stroke-width="1.1" fill="none"/></svg>
<div style="position:absolute;left:196px;top:253px;width:879px;height:1px;background:#d6d6d6"></div>
<svg style="position:absolute;left:199px;top:256px;" width="12" height="12" viewBox="0 0 12 12"><rect x="0" y="0" width="12" height="12" fill="#fff"/><path d="M0.5 12V0.5H12" stroke="#9a9a9a" fill="none"/><path d="M1.5 11V1.5H11" stroke="#000" fill="none"/><path d="M11.5 1V11.5H1" stroke="#c4c4c4" fill="none"/></svg>
<svg style="position:absolute;left:264px;top:254px;" width="17" height="17" viewBox="0 0 17 17"><path d="M9.5 0.5h3.5a2.5 2.5 0 0 1 2.5 2.5v11a2.5 2.5 0 0 1-2.5 2.5H9.5A2.5 2.5 0 0 1 7 14V3A2.5 2.5 0 0 1 9.5 0.5z" fill="#fff200" stroke="#000" stroke-width="1.1"/><path d="M7.6 8.3V3.2A2.2 2.2 0 0 1 9.8 1h3a2.2 2.2 0 0 1 2.2 2.2v5.1z" fill="#ff0000"/><path d="M7.3 8.5h8" stroke="#000" stroke-width="0.8"/><path d="M15.6 3v11.5" stroke="#000" stroke-width="1"/><rect x="9" y="2.3" width="1" height="2" fill="#cfe8e8"/><circle cx="4.8" cy="10.8" r="4.4" fill="#fff" stroke="#000" stroke-width="1.1" stroke-dasharray="1.6 0.5"/><path d="M3.2 9.2l3.3 3" stroke="#888" stroke-width="0.9"/></svg>
<div class="t" style="left:288px;top:255px;font-size:11.75px;color:#141428;font-family:'Liberation Sans', sans-serif;">Misc Prescription (Articaine 4% WITH Adrenaline 1 in</div>
<div class="t" style="left:288px;top:270px;font-size:11.75px;color:#141428;font-family:'Liberation Sans', sans-serif;">100,000 Cartridge)</div>
<div class="t" style="left:671px;top:255px;font-size:11.75px;color:#141428;font-family:'Liberation Sans', sans-serif;">mL, Cartridge, dental, ONCE</div>
<div style="position:absolute;left:196px;top:288px;width:879px;height:1px;background:#d6d6d6"></div>
<svg style="position:absolute;left:199px;top:291px;" width="12" height="12" viewBox="0 0 12 12"><rect x="0" y="0" width="12" height="12" fill="#fff"/><path d="M0.5 12V0.5H12" stroke="#9a9a9a" fill="none"/><path d="M1.5 11V1.5H11" stroke="#000" fill="none"/><path d="M11.5 1V11.5H1" stroke="#c4c4c4" fill="none"/></svg>
<svg style="position:absolute;left:264px;top:289px;" width="17" height="17" viewBox="0 0 17 17"><path d="M9.5 0.5h3.5a2.5 2.5 0 0 1 2.5 2.5v11a2.5 2.5 0 0 1-2.5 2.5H9.5A2.5 2.5 0 0 1 7 14V3A2.5 2.5 0 0 1 9.5 0.5z" fill="#fff200" stroke="#000" stroke-width="1.1"/><path d="M7.6 8.3V3.2A2.2 2.2 0 0 1 9.8 1h3a2.2 2.2 0 0 1 2.2 2.2v5.1z" fill="#ff0000"/><path d="M7.3 8.5h8" stroke="#000" stroke-width="0.8"/><path d="M15.6 3v11.5" stroke="#000" stroke-width="1"/><rect x="9" y="2.3" width="1" height="2" fill="#cfe8e8"/><circle cx="4.8" cy="10.8" r="4.4" fill="#fff" stroke="#000" stroke-width="1.1" stroke-dasharray="1.6 0.5"/><path d="M3.2 9.2l3.3 3" stroke="#888" stroke-width="0.9"/></svg>
<div class="t" style="left:288px;top:290px;font-size:11.75px;color:#141428;font-family:'Liberation Sans', sans-serif;">Bupivacaine (Bupivacaine&nbsp; 0.5 % Injection)</div>
<div class="t" style="left:671px;top:290px;font-size:11.75px;color:#141428;font-family:'Liberation Sans', sans-serif;">mL, Injection, dental, ONCE</div>
<div style="position:absolute;left:196px;top:306px;width:879px;height:1px;background:#d6d6d6"></div>
<svg style="position:absolute;left:199px;top:309px;" width="12" height="12" viewBox="0 0 12 12"><rect x="0" y="0" width="12" height="12" fill="#fff"/><path d="M0.5 12V0.5H12" stroke="#9a9a9a" fill="none"/><path d="M1.5 11V1.5H11" stroke="#000" fill="none"/><path d="M11.5 1V11.5H1" stroke="#c4c4c4" fill="none"/></svg>
<svg style="position:absolute;left:264px;top:307px;" width="17" height="17" viewBox="0 0 17 17"><path d="M9.5 0.5h3.5a2.5 2.5 0 0 1 2.5 2.5v11a2.5 2.5 0 0 1-2.5 2.5H9.5A2.5 2.5 0 0 1 7 14V3A2.5 2.5 0 0 1 9.5 0.5z" fill="#fff200" stroke="#000" stroke-width="1.1"/><path d="M7.6 8.3V3.2A2.2 2.2 0 0 1 9.8 1h3a2.2 2.2 0 0 1 2.2 2.2v5.1z" fill="#ff0000"/><path d="M7.3 8.5h8" stroke="#000" stroke-width="0.8"/><path d="M15.6 3v11.5" stroke="#000" stroke-width="1"/><rect x="9" y="2.3" width="1" height="2" fill="#cfe8e8"/><circle cx="4.8" cy="10.8" r="4.4" fill="#fff" stroke="#000" stroke-width="1.1" stroke-dasharray="1.6 0.5"/><path d="M3.2 9.2l3.3 3" stroke="#888" stroke-width="0.9"/></svg>
<div class="t" style="left:288px;top:308px;font-size:11.75px;color:#141428;font-family:'Liberation Sans', sans-serif;">Adrenaline + Lidocaine (Lidocaine 2% with Adrenaline</div>
<div class="t" style="left:288px;top:323px;font-size:11.75px;color:#141428;font-family:'Liberation Sans', sans-serif;">1 in 80,000 dental cartridges)</div>
<div class="t" style="left:671px;top:308px;font-size:11.75px;color:#141428;font-family:'Liberation Sans', sans-serif;">mL, Cartridge, dental, ONCE</div>
<div style="position:absolute;left:196px;top:341px;width:879px;height:1px;background:#d6d6d6"></div>
<svg style="position:absolute;left:264px;top:342px;" width="17" height="17" viewBox="0 0 17 17"><defs><pattern id="chk" width="2" height="2" patternUnits="userSpaceOnUse"><rect width="2" height="2" fill="#ffff00"/><rect width="1" height="1" fill="#ffffc8"/></pattern></defs><path d="M0.6 8.6L5.8 1.6L15.6 7.6L8 15.6Z" fill="url(#chk)" stroke="#000" stroke-width="1.1" stroke-dasharray="1.2 0.8"/><path d="M0 8.3h2" stroke="#000" stroke-width="1.1"/><path d="M15.2 7.9L8.2 15.1L7.2 14L13.8 7.2z" fill="#a09a00"/><path d="M6.4 0.8h2.4l0.8 0.8h2.2l0.8 1v1.6l1.6 1.2v2.4l-1 1H9.6l-2-1.2l-1.2-2z" fill="#fff" stroke="#000" stroke-width="1.1"/><path d="M7.4 1.6l1.6 1.4M7.8 4.6l1.6 2.4" stroke="#00f0f0" stroke-width="1.5"/><path d="M10.4 3.6v1.8M12 3.4v1.6" stroke="#000" stroke-width="0.9"/></svg>
<div class="t" style="left:284px;top:344px;font-size:15.4px;font-weight:700;color:#111;font-family:'Liberation Serif', serif;">Oral Antibiotics</div>
<div style="position:absolute;left:1057px;top:342px;width:18px;height:21px;background:#f6f6f6"></div>
<svg style="position:absolute;left:1061px;top:345px;" width="10" height="15" viewBox="0 0 10 15"><path d="M1 5l4-4 4 4M1 10l4 4 4-4" stroke="#c4c4c4" stroke-width="1.1" fill="none"/></svg>
<div style="position:absolute;left:196px;top:363px;width:879px;height:1px;background:#d6d6d6"></div>
<svg style="position:absolute;left:199px;top:366px;" width="12" height="12" viewBox="0 0 12 12"><rect x="0" y="0" width="12" height="12" fill="#fff"/><path d="M0.5 12V0.5H12" stroke="#9a9a9a" fill="none"/><path d="M1.5 11V1.5H11" stroke="#000" fill="none"/><path d="M11.5 1V11.5H1" stroke="#c4c4c4" fill="none"/></svg>
<svg style="position:absolute;left:264px;top:364px;" width="17" height="17" viewBox="0 0 17 17"><path d="M9.5 0.5h3.5a2.5 2.5 0 0 1 2.5 2.5v11a2.5 2.5 0 0 1-2.5 2.5H9.5A2.5 2.5 0 0 1 7 14V3A2.5 2.5 0 0 1 9.5 0.5z" fill="#fff200" stroke="#000" stroke-width="1.1"/><path d="M7.6 8.3V3.2A2.2 2.2 0 0 1 9.8 1h3a2.2 2.2 0 0 1 2.2 2.2v5.1z" fill="#ff0000"/><path d="M7.3 8.5h8" stroke="#000" stroke-width="0.8"/><path d="M15.6 3v11.5" stroke="#000" stroke-width="1"/><rect x="9" y="2.3" width="1" height="2" fill="#cfe8e8"/><circle cx="4.8" cy="10.8" r="4.4" fill="#fff" stroke="#000" stroke-width="1.1" stroke-dasharray="1.6 0.5"/><path d="M3.2 9.2l3.3 3" stroke="#888" stroke-width="0.9"/></svg>
<div class="t" style="left:288px;top:365px;font-size:11.75px;color:#141428;font-family:'Liberation Sans', sans-serif;">Amoxicillin (Amoxicillin oral powder Sachet 3 g)</div>
<div class="t" style="left:671px;top:365px;font-size:11.75px;color:#141428;font-family:'Liberation Sans', sans-serif;">DOSE: 3 gram, oral, ONCE</div>
<div style="position:absolute;left:196px;top:381px;width:879px;height:1px;background:#d6d6d6"></div>
<svg style="position:absolute;left:199px;top:384px;" width="12" height="12" viewBox="0 0 12 12"><rect x="0" y="0" width="12" height="12" fill="#fff"/><path d="M0.5 12V0.5H12" stroke="#9a9a9a" fill="none"/><path d="M1.5 11V1.5H11" stroke="#000" fill="none"/><path d="M11.5 1V11.5H1" stroke="#c4c4c4" fill="none"/></svg>
<svg style="position:absolute;left:264px;top:382px;" width="17" height="17" viewBox="0 0 17 17"><path d="M9.5 0.5h3.5a2.5 2.5 0 0 1 2.5 2.5v11a2.5 2.5 0 0 1-2.5 2.5H9.5A2.5 2.5 0 0 1 7 14V3A2.5 2.5 0 0 1 9.5 0.5z" fill="#fff200" stroke="#000" stroke-width="1.1"/><path d="M7.6 8.3V3.2A2.2 2.2 0 0 1 9.8 1h3a2.2 2.2 0 0 1 2.2 2.2v5.1z" fill="#ff0000"/><path d="M7.3 8.5h8" stroke="#000" stroke-width="0.8"/><path d="M15.6 3v11.5" stroke="#000" stroke-width="1"/><rect x="9" y="2.3" width="1" height="2" fill="#cfe8e8"/><circle cx="4.8" cy="10.8" r="4.4" fill="#fff" stroke="#000" stroke-width="1.1" stroke-dasharray="1.6 0.5"/><path d="M3.2 9.2l3.3 3" stroke="#888" stroke-width="0.9"/></svg>
<div class="t" style="left:288px;top:383px;font-size:11.75px;color:#141428;font-family:'Liberation Sans', sans-serif;">Clindamycin</div>
<div class="t" style="left:671px;top:383px;font-size:11.75px;color:#141428;font-family:'Liberation Sans', sans-serif;">mg, Capsule, oral, ONCE</div>
<div style="position:absolute;left:196px;top:399px;width:879px;height:1px;background:#d6d6d6"></div>
<svg style="position:absolute;left:264px;top:400px;" width="17" height="17" viewBox="0 0 17 17"><defs><pattern id="chk" width="2" height="2" patternUnits="userSpaceOnUse"><rect width="2" height="2" fill="#ffff00"/><rect width="1" height="1" fill="#ffffc8"/></pattern></defs><path d="M0.6 8.6L5.8 1.6L15.6 7.6L8 15.6Z" fill="url(#chk)" stroke="#000" stroke-width="1.1" stroke-dasharray="1.2 0.8"/><path d="M0 8.3h2" stroke="#000" stroke-width="1.1"/><path d="M15.2 7.9L8.2 15.1L7.2 14L13.8 7.2z" fill="#a09a00"/><path d="M6.4 0.8h2.4l0.8 0.8h2.2l0.8 1v1.6l1.6 1.2v2.4l-1 1H9.6l-2-1.2l-1.2-2z" fill="#fff" stroke="#000" stroke-width="1.1"/><path d="M7.4 1.6l1.6 1.4M7.8 4.6l1.6 2.4" stroke="#00f0f0" stroke-width="1.5"/><path d="M10.4 3.6v1.8M12 3.4v1.6" stroke="#000" stroke-width="0.9"/></svg>
<div class="t" style="left:284px;top:402px;font-size:15.4px;font-weight:700;color:#111;font-family:'Liberation Serif', serif;">Medications</div>
<div style="position:absolute;left:1057px;top:400px;width:18px;height:21px;background:#f6f6f6"></div>
<svg style="position:absolute;left:1061px;top:403px;" width="10" height="15" viewBox="0 0 10 15"><path d="M1 5l4-4 4 4M1 10l4 4 4-4" stroke="#c4c4c4" stroke-width="1.1" fill="none"/></svg>
<div style="position:absolute;left:196px;top:421px;width:879px;height:1px;background:#d6d6d6"></div>
<svg style="position:absolute;left:199px;top:424px;" width="12" height="12" viewBox="0 0 12 12"><rect x="0" y="0" width="12" height="12" fill="#fff"/><path d="M0.5 12V0.5H12" stroke="#9a9a9a" fill="none"/><path d="M1.5 11V1.5H11" stroke="#000" fill="none"/><path d="M11.5 1V11.5H1" stroke="#c4c4c4" fill="none"/><path d="M3 5.6l2.2 2.4L9.2 3.4" stroke="#000" stroke-width="1.8" fill="none"/></svg>
<svg style="position:absolute;left:264px;top:422px;" width="17" height="17" viewBox="0 0 17 17"><path d="M9.5 0.5h3.5a2.5 2.5 0 0 1 2.5 2.5v11a2.5 2.5 0 0 1-2.5 2.5H9.5A2.5 2.5 0 0 1 7 14V3A2.5 2.5 0 0 1 9.5 0.5z" fill="#fff200" stroke="#000" stroke-width="1.1"/><path d="M7.6 8.3V3.2A2.2 2.2 0 0 1 9.8 1h3a2.2 2.2 0 0 1 2.2 2.2v5.1z" fill="#ff0000"/><path d="M7.3 8.5h8" stroke="#000" stroke-width="0.8"/><path d="M15.6 3v11.5" stroke="#000" stroke-width="1"/><rect x="9" y="2.3" width="1" height="2" fill="#cfe8e8"/><circle cx="4.8" cy="10.8" r="4.4" fill="#fff" stroke="#000" stroke-width="1.1" stroke-dasharray="1.6 0.5"/><path d="M3.2 9.2l3.3 3" stroke="#888" stroke-width="0.9"/></svg>
<div class="t" style="left:288px;top:423px;font-size:11.75px;color:#141428;font-family:'Liberation Sans', sans-serif;">Flumazenil (Flumazenil Injection)</div>
<div class="t" style="left:671px;top:423px;font-size:11.75px;color:#141428;font-family:'Liberation Sans', sans-serif;">DOSE: 200 microgram, Injection, intravenous, ONCE</div>
<div style="position:absolute;left:196px;top:439px;width:879px;height:1px;background:#d6d6d6"></div>
<svg style="position:absolute;left:199px;top:442px;" width="12" height="12" viewBox="0 0 12 12"><rect x="0" y="0" width="12" height="12" fill="#fff"/><path d="M0.5 12V0.5H12" stroke="#9a9a9a" fill="none"/><path d="M1.5 11V1.5H11" stroke="#000" fill="none"/><path d="M11.5 1V11.5H1" stroke="#c4c4c4" fill="none"/></svg>
<svg style="position:absolute;left:264px;top:440px;" width="17" height="17" viewBox="0 0 17 17"><path d="M9.5 0.5h3.5a2.5 2.5 0 0 1 2.5 2.5v11a2.5 2.5 0 0 1-2.5 2.5H9.5A2.5 2.5 0 0 1 7 14V3A2.5 2.5 0 0 1 9.5 0.5z" fill="#fff200" stroke="#000" stroke-width="1.1"/><path d="M7.6 8.3V3.2A2.2 2.2 0 0 1 9.8 1h3a2.2 2.2 0 0 1 2.2 2.2v5.1z" fill="#ff0000"/><path d="M7.3 8.5h8" stroke="#000" stroke-width="0.8"/><path d="M15.6 3v11.5" stroke="#000" stroke-width="1"/><rect x="9" y="2.3" width="1" height="2" fill="#cfe8e8"/><circle cx="4.8" cy="10.8" r="4.4" fill="#fff" stroke="#000" stroke-width="1.1" stroke-dasharray="1.6 0.5"/><path d="M3.2 9.2l3.3 3" stroke="#888" stroke-width="0.9"/></svg>
<div class="t" style="left:288px;top:441px;font-size:11.75px;color:#141428;font-family:'Liberation Sans', sans-serif;">Hydrocortisone (Hydrocortisone&nbsp; sodium succinate</div>
<div class="t" style="left:288px;top:456px;font-size:11.75px;color:#141428;font-family:'Liberation Sans', sans-serif;">Injection)</div>
<div class="t" style="left:671px;top:441px;font-size:11.75px;color:#141428;font-family:'Liberation Sans', sans-serif;">mg, Injection, intramuscular, ONCE</div>
<div style="position:absolute;left:196px;top:473px;width:879px;height:1px;background:#d6d6d6"></div>
<svg style="position:absolute;left:199px;top:476px;" width="12" height="12" viewBox="0 0 12 12"><rect x="0" y="0" width="12" height="12" fill="#fff"/><path d="M0.5 12V0.5H12" stroke="#9a9a9a" fill="none"/><path d="M1.5 11V1.5H11" stroke="#000" fill="none"/><path d="M11.5 1V11.5H1" stroke="#c4c4c4" fill="none"/></svg>
<svg style="position:absolute;left:264px;top:474px;" width="17" height="17" viewBox="0 0 17 17"><path d="M9.5 0.5h3.5a2.5 2.5 0 0 1 2.5 2.5v11a2.5 2.5 0 0 1-2.5 2.5H9.5A2.5 2.5 0 0 1 7 14V3A2.5 2.5 0 0 1 9.5 0.5z" fill="#fff200" stroke="#000" stroke-width="1.1"/><path d="M7.6 8.3V3.2A2.2 2.2 0 0 1 9.8 1h3a2.2 2.2 0 0 1 2.2 2.2v5.1z" fill="#ff0000"/><path d="M7.3 8.5h8" stroke="#000" stroke-width="0.8"/><path d="M15.6 3v11.5" stroke="#000" stroke-width="1"/><rect x="9" y="2.3" width="1" height="2" fill="#cfe8e8"/><circle cx="4.8" cy="10.8" r="4.4" fill="#fff" stroke="#000" stroke-width="1.1" stroke-dasharray="1.6 0.5"/><path d="M3.2 9.2l3.3 3" stroke="#888" stroke-width="0.9"/></svg>
<div class="t" style="left:288px;top:475px;font-size:11.75px;color:#141428;font-family:'Liberation Sans', sans-serif;">Lidocaine (Lidocaine injection 1%)</div>
<div class="t" style="left:671px;top:475px;font-size:11.75px;color:#141428;font-family:'Liberation Sans', sans-serif;">mL, Injection, dental, ONCE, Indication: Intramucosal nerve block</div>
<div style="position:absolute;left:196px;top:491px;width:879px;height:1px;background:#d6d6d6"></div>
<svg style="position:absolute;left:199px;top:494px;" width="12" height="12" viewBox="0 0 12 12"><rect x="0" y="0" width="12" height="12" fill="#fff"/><path d="M0.5 12V0.5H12" stroke="#9a9a9a" fill="none"/><path d="M1.5 11V1.5H11" stroke="#000" fill="none"/><path d="M11.5 1V11.5H1" stroke="#c4c4c4" fill="none"/></svg>
<svg style="position:absolute;left:264px;top:492px;" width="17" height="17" viewBox="0 0 17 17"><path d="M9.5 0.5h3.5a2.5 2.5 0 0 1 2.5 2.5v11a2.5 2.5 0 0 1-2.5 2.5H9.5A2.5 2.5 0 0 1 7 14V3A2.5 2.5 0 0 1 9.5 0.5z" fill="#fff200" stroke="#000" stroke-width="1.1"/><path d="M7.6 8.3V3.2A2.2 2.2 0 0 1 9.8 1h3a2.2 2.2 0 0 1 2.2 2.2v5.1z" fill="#ff0000"/><path d="M7.3 8.5h8" stroke="#000" stroke-width="0.8"/><path d="M15.6 3v11.5" stroke="#000" stroke-width="1"/><rect x="9" y="2.3" width="1" height="2" fill="#cfe8e8"/><circle cx="4.8" cy="10.8" r="4.4" fill="#fff" stroke="#000" stroke-width="1.1" stroke-dasharray="1.6 0.5"/><path d="M3.2 9.2l3.3 3" stroke="#888" stroke-width="0.9"/></svg>
<div class="t" style="left:288px;top:493px;font-size:11.75px;color:#141428;font-family:'Liberation Sans', sans-serif;">Midazolam (Midazolam Injection)</div>
<div class="t" style="left:671px;top:493px;font-size:11.75px;color:#141428;font-family:'Liberation Sans', sans-serif;">DOSE: 1 mg, Injection, intravenous, Symptom Relief, PRN, sedation,</div>
<div class="t" style="left:671px;top:508px;font-size:11.75px;color:#141428;font-family:'Liberation Sans', sans-serif;">increase in 0.5mg increments every 5 minutes until analgesia is attained.</div>
<div style="position:absolute;left:196px;top:526px;width:879px;height:1px;background:#d6d6d6"></div>
<svg style="position:absolute;left:199px;top:529px;" width="12" height="12" viewBox="0 0 12 12"><rect x="0" y="0" width="12" height="12" fill="#fff"/><path d="M0.5 12V0.5H12" stroke="#9a9a9a" fill="none"/><path d="M1.5 11V1.5H11" stroke="#000" fill="none"/><path d="M11.5 1V11.5H1" stroke="#c4c4c4" fill="none"/></svg>
<svg style="position:absolute;left:264px;top:527px;" width="17" height="17" viewBox="0 0 17 17"><path d="M9.5 0.5h3.5a2.5 2.5 0 0 1 2.5 2.5v11a2.5 2.5 0 0 1-2.5 2.5H9.5A2.5 2.5 0 0 1 7 14V3A2.5 2.5 0 0 1 9.5 0.5z" fill="#fff200" stroke="#000" stroke-width="1.1"/><path d="M7.6 8.3V3.2A2.2 2.2 0 0 1 9.8 1h3a2.2 2.2 0 0 1 2.2 2.2v5.1z" fill="#ff0000"/><path d="M7.3 8.5h8" stroke="#000" stroke-width="0.8"/><path d="M15.6 3v11.5" stroke="#000" stroke-width="1"/><rect x="9" y="2.3" width="1" height="2" fill="#cfe8e8"/><circle cx="4.8" cy="10.8" r="4.4" fill="#fff" stroke="#000" stroke-width="1.1" stroke-dasharray="1.6 0.5"/><path d="M3.2 9.2l3.3 3" stroke="#888" stroke-width="0.9"/></svg>
<div class="t" style="left:288px;top:528px;font-size:11.75px;color:#141428;font-family:'Liberation Sans', sans-serif;">PrednisoLONE</div>
<div class="t" style="left:671px;top:528px;font-size:11.75px;color:#141428;font-family:'Liberation Sans', sans-serif;">mg, Tablet, oral, ONCE</div>
<div style="position:absolute;left:196px;top:544px;width:879px;height:1px;background:#d6d6d6"></div>
<svg style="position:absolute;left:199px;top:547px;" width="12" height="12" viewBox="0 0 12 12"><rect x="0" y="0" width="12" height="12" fill="#fff"/><path d="M0.5 12V0.5H12" stroke="#9a9a9a" fill="none"/><path d="M1.5 11V1.5H11" stroke="#000" fill="none"/><path d="M11.5 1V11.5H1" stroke="#c4c4c4" fill="none"/></svg>
<svg style="position:absolute;left:264px;top:545px;" width="17" height="17" viewBox="0 0 17 17"><path d="M9.5 0.5h3.5a2.5 2.5 0 0 1 2.5 2.5v11a2.5 2.5 0 0 1-2.5 2.5H9.5A2.5 2.5 0 0 1 7 14V3A2.5 2.5 0 0 1 9.5 0.5z" fill="#fff200" stroke="#000" stroke-width="1.1"/><path d="M7.6 8.3V3.2A2.2 2.2 0 0 1 9.8 1h3a2.2 2.2 0 0 1 2.2 2.2v5.1z" fill="#ff0000"/><path d="M7.3 8.5h8" stroke="#000" stroke-width="0.8"/><path d="M15.6 3v11.5" stroke="#000" stroke-width="1"/><rect x="9" y="2.3" width="1" height="2" fill="#cfe8e8"/><circle cx="4.8" cy="10.8" r="4.4" fill="#fff" stroke="#000" stroke-width="1.1" stroke-dasharray="1.6 0.5"/><path d="M3.2 9.2l3.3 3" stroke="#888" stroke-width="0.9"/></svg>
<div class="t" style="left:288px;top:546px;font-size:11.75px;color:#141428;font-family:'Liberation Sans', sans-serif;">Sodium chloride (Sodium chloride 0.9% Flush)</div>
<div class="t" style="left:671px;top:546px;font-size:11.75px;color:#141428;font-family:'Liberation Sans', sans-serif;">DOSE: 2 mL, intravenous, As required, PRN, line patency, Cannula flush</div>
<div style="position:absolute;left:196px;top:562px;width:879px;height:1px;background:#d6d6d6"></div>
<svg style="position:absolute;left:264px;top:563px;" width="17" height="17" viewBox="0 0 17 17"><defs><pattern id="chk" width="2" height="2" patternUnits="userSpaceOnUse"><rect width="2" height="2" fill="#ffff00"/><rect width="1" height="1" fill="#ffffc8"/></pattern></defs><path d="M0.6 8.6L5.8 1.6L15.6 7.6L8 15.6Z" fill="url(#chk)" stroke="#000" stroke-width="1.1" stroke-dasharray="1.2 0.8"/><path d="M0 8.3h2" stroke="#000" stroke-width="1.1"/><path d="M15.2 7.9L8.2 15.1L7.2 14L13.8 7.2z" fill="#a09a00"/><path d="M6.4 0.8h2.4l0.8 0.8h2.2l0.8 1v1.6l1.6 1.2v2.4l-1 1H9.6l-2-1.2l-1.2-2z" fill="#fff" stroke="#000" stroke-width="1.1"/><path d="M7.4 1.6l1.6 1.4M7.8 4.6l1.6 2.4" stroke="#00f0f0" stroke-width="1.5"/><path d="M10.4 3.6v1.8M12 3.4v1.6" stroke="#000" stroke-width="0.9"/></svg>
<div class="t" style="left:284px;top:565px;font-size:15.4px;font-weight:700;color:#111;font-family:'Liberation Serif', serif;">Prescription Medications</div>
<div style="position:absolute;left:1057px;top:563px;width:18px;height:21px;background:#f6f6f6"></div>
<svg style="position:absolute;left:1061px;top:566px;" width="10" height="15" viewBox="0 0 10 15"><path d="M1 5l4-4 4 4M1 10l4 4 4-4" stroke="#c4c4c4" stroke-width="1.1" fill="none"/></svg>
<div style="position:absolute;left:196px;top:584px;width:879px;height:1px;background:#d6d6d6"></div>
<svg style="position:absolute;left:199px;top:587px;" width="12" height="12" viewBox="0 0 12 12"><rect x="0" y="0" width="12" height="12" fill="#fff"/><path d="M0.5 12V0.5H12" stroke="#9a9a9a" fill="none"/><path d="M1.5 11V1.5H11" stroke="#000" fill="none"/><path d="M11.5 1V11.5H1" stroke="#c4c4c4" fill="none"/></svg>
<svg style="position:absolute;left:264px;top:585px;" width="17" height="17" viewBox="0 0 17 17"><rect x="0.6" y="0.6" width="10.8" height="2.4" fill="#fff" stroke="#000" stroke-width="1.2"/><rect x="1.4" y="3" width="9.2" height="13" fill="#fff" stroke="#000" stroke-width="1.3"/><path d="M2.3 4.3h7.4" stroke="#f5e400" stroke-width="1.2"/><path d="M2.8 4.3h6.4" stroke="#e00" stroke-width="1.2" stroke-dasharray="1 1"/><rect x="2.1" y="12.6" width="7.8" height="2.8" fill="#f3e000"/><path d="M2.3 13.3l1 1 1-1 1 1 1-1 1 1 1-1 1 1" stroke="#e22" stroke-width="0.9" fill="none"/><path d="M2 11.9h8" stroke="#000" stroke-width="0.9"/><rect x="12.2" y="6.6" width="3.6" height="7.2" rx="1.6" fill="#fff000" stroke="#000" stroke-width="1"/><rect x="12.8" y="7.2" width="2.4" height="3" fill="#e00"/></svg>
<div class="t" style="left:288px;top:586px;font-size:11.75px;color:#141428;font-family:'Liberation Sans', sans-serif;">Amoxicillin</div>
<div class="t" style="left:671px;top:586px;font-size:11.75px;color:#141428;font-family:'Liberation Sans', sans-serif;">500 mg, Capsule, oral, THREE times a day, Duration: 5 day(s)</div>
<div style="position:absolute;left:196px;top:602px;width:879px;height:1px;background:#d6d6d6"></div>
<svg style="position:absolute;left:199px;top:605px;" width="12" height="12" viewBox="0 0 12 12"><rect x="0" y="0" width="12" height="12" fill="#fff"/><path d="M0.5 12V0.5H12" stroke="#9a9a9a" fill="none"/><path d="M1.5 11V1.5H11" stroke="#000" fill="none"/><path d="M11.5 1V11.5H1" stroke="#c4c4c4" fill="none"/></svg>
<svg style="position:absolute;left:264px;top:603px;" width="17" height="17" viewBox="0 0 17 17"><rect x="0.6" y="0.6" width="10.8" height="2.4" fill="#fff" stroke="#000" stroke-width="1.2"/><rect x="1.4" y="3" width="9.2" height="13" fill="#fff" stroke="#000" stroke-width="1.3"/><path d="M2.3 4.3h7.4" stroke="#f5e400" stroke-width="1.2"/><path d="M2.8 4.3h6.4" stroke="#e00" stroke-width="1.2" stroke-dasharray="1 1"/><rect x="2.1" y="12.6" width="7.8" height="2.8" fill="#f3e000"/><path d="M2.3 13.3l1 1 1-1 1 1 1-1 1 1 1-1 1 1" stroke="#e22" stroke-width="0.9" fill="none"/><path d="M2 11.9h8" stroke="#000" stroke-width="0.9"/><rect x="12.2" y="6.6" width="3.6" height="7.2" rx="1.6" fill="#fff000" stroke="#000" stroke-width="1"/><rect x="12.8" y="7.2" width="2.4" height="3" fill="#e00"/></svg>
<div class="t" style="left:288px;top:604px;font-size:11.75px;color:#141428;font-family:'Liberation Sans', sans-serif;">Amoxicillin (Amoxicillin 250mg/5ml oral suspension)</div>
<div class="t" style="left:671px;top:604px;font-size:11.75px;color:#141428;font-family:'Liberation Sans', sans-serif;">mg, Oral Suspension, oral, THREE times a day, Duration: 5 | day(s)</div>
<div style="position:absolute;left:196px;top:620px;width:879px;height:1px;background:#d6d6d6"></div>
<svg style="position:absolute;left:199px;top:623px;" width="12" height="12" viewBox="0 0 12 12"><rect x="0" y="0" width="12" height="12" fill="#fff"/><path d="M0.5 12V0.5H12" stroke="#9a9a9a" fill="none"/><path d="M1.5 11V1.5H11" stroke="#000" fill="none"/><path d="M11.5 1V11.5H1" stroke="#c4c4c4" fill="none"/></svg>
<svg style="position:absolute;left:264px;top:621px;" width="17" height="17" viewBox="0 0 17 17"><rect x="0.6" y="0.6" width="10.8" height="2.4" fill="#fff" stroke="#000" stroke-width="1.2"/><rect x="1.4" y="3" width="9.2" height="13" fill="#fff" stroke="#000" stroke-width="1.3"/><path d="M2.3 4.3h7.4" stroke="#f5e400" stroke-width="1.2"/><path d="M2.8 4.3h6.4" stroke="#e00" stroke-width="1.2" stroke-dasharray="1 1"/><rect x="2.1" y="12.6" width="7.8" height="2.8" fill="#f3e000"/><path d="M2.3 13.3l1 1 1-1 1 1 1-1 1 1 1-1 1 1" stroke="#e22" stroke-width="0.9" fill="none"/><path d="M2 11.9h8" stroke="#000" stroke-width="0.9"/><rect x="12.2" y="6.6" width="3.6" height="7.2" rx="1.6" fill="#fff000" stroke="#000" stroke-width="1"/><rect x="12.8" y="7.2" width="2.4" height="3" fill="#e00"/></svg>
<div class="t" style="left:288px;top:622px;font-size:11.75px;color:#141428;font-family:'Liberation Sans', sans-serif;">Amoxicillin (Amoxicillin 125mg/5ml oral suspension)</div>
<div class="t" style="left:671px;top:622px;font-size:11.75px;color:#141428;font-family:'Liberation Sans', sans-serif;">mg, Oral Suspension, oral, THREE times a day, Duration: 5 | day(s)</div>
<div style="position:absolute;left:196px;top:638px;width:879px;height:1px;background:#d6d6d6"></div>
<svg style="position:absolute;left:199px;top:641px;" width="12" height="12" viewBox="0 0 12 12"><rect x="0" y="0" width="12" height="12" fill="#fff"/><path d="M0.5 12V0.5H12" stroke="#9a9a9a" fill="none"/><path d="M1.5 11V1.5H11" stroke="#000" fill="none"/><path d="M11.5 1V11.5H1" stroke="#c4c4c4" fill="none"/></svg>
<svg style="position:absolute;left:264px;top:639px;" width="17" height="17" viewBox="0 0 17 17"><rect x="0.6" y="0.6" width="10.8" height="2.4" fill="#fff" stroke="#000" stroke-width="1.2"/><rect x="1.4" y="3" width="9.2" height="13" fill="#fff" stroke="#000" stroke-width="1.3"/><path d="M2.3 4.3h7.4" stroke="#f5e400" stroke-width="1.2"/><path d="M2.8 4.3h6.4" stroke="#e00" stroke-width="1.2" stroke-dasharray="1 1"/><rect x="2.1" y="12.6" width="7.8" height="2.8" fill="#f3e000"/><path d="M2.3 13.3l1 1 1-1 1 1 1-1 1 1 1-1 1 1" stroke="#e22" stroke-width="0.9" fill="none"/><path d="M2 11.9h8" stroke="#000" stroke-width="0.9"/><rect x="12.2" y="6.6" width="3.6" height="7.2" rx="1.6" fill="#fff000" stroke="#000" stroke-width="1"/><rect x="12.8" y="7.2" width="2.4" height="3" fill="#e00"/></svg>
<div class="t" style="left:288px;top:640px;font-size:11.75px;color:#141428;font-family:'Liberation Sans', sans-serif;">Clindamycin</div>
<div class="t" style="left:671px;top:640px;font-size:11.75px;color:#141428;font-family:'Liberation Sans', sans-serif;">mg, Capsule, oral, FOUR times a day, day(s)</div>
<div style="position:absolute;left:196px;top:656px;width:879px;height:1px;background:#d6d6d6"></div>
<svg style="position:absolute;left:199px;top:659px;" width="12" height="12" viewBox="0 0 12 12"><rect x="0" y="0" width="12" height="12" fill="#fff"/><path d="M0.5 12V0.5H12" stroke="#9a9a9a" fill="none"/><path d="M1.5 11V1.5H11" stroke="#000" fill="none"/><path d="M11.5 1V11.5H1" stroke="#c4c4c4" fill="none"/></svg>
<svg style="position:absolute;left:264px;top:657px;" width="17" height="17" viewBox="0 0 17 17"><rect x="0.6" y="0.6" width="10.8" height="2.4" fill="#fff" stroke="#000" stroke-width="1.2"/><rect x="1.4" y="3" width="9.2" height="13" fill="#fff" stroke="#000" stroke-width="1.3"/><path d="M2.3 4.3h7.4" stroke="#f5e400" stroke-width="1.2"/><path d="M2.8 4.3h6.4" stroke="#e00" stroke-width="1.2" stroke-dasharray="1 1"/><rect x="2.1" y="12.6" width="7.8" height="2.8" fill="#f3e000"/><path d="M2.3 13.3l1 1 1-1 1 1 1-1 1 1 1-1 1 1" stroke="#e22" stroke-width="0.9" fill="none"/><path d="M2 11.9h8" stroke="#000" stroke-width="0.9"/><rect x="12.2" y="6.6" width="3.6" height="7.2" rx="1.6" fill="#fff000" stroke="#000" stroke-width="1"/><rect x="12.8" y="7.2" width="2.4" height="3" fill="#e00"/></svg>
<div class="t" style="left:288px;top:658px;font-size:11.75px;color:#141428;font-family:'Liberation Sans', sans-serif;">Metronidazole</div>
<div class="t" style="left:671px;top:658px;font-size:11.75px;color:#141428;font-family:'Liberation Sans', sans-serif;">400 mg, Tablet, oral, THREE times a day, Duration: 3 | day(s)</div>
<div style="position:absolute;left:196px;top:674px;width:879px;height:1px;background:#d6d6d6"></div>
<svg style="position:absolute;left:199px;top:677px;" width="12" height="12" viewBox="0 0 12 12"><rect x="0" y="0" width="12" height="12" fill="#fff"/><path d="M0.5 12V0.5H12" stroke="#9a9a9a" fill="none"/><path d="M1.5 11V1.5H11" stroke="#000" fill="none"/><path d="M11.5 1V11.5H1" stroke="#c4c4c4" fill="none"/></svg>
<svg style="position:absolute;left:264px;top:675px;" width="17" height="17" viewBox="0 0 17 17"><rect x="0.6" y="0.6" width="10.8" height="2.4" fill="#fff" stroke="#000" stroke-width="1.2"/><rect x="1.4" y="3" width="9.2" height="13" fill="#fff" stroke="#000" stroke-width="1.3"/><path d="M2.3 4.3h7.4" stroke="#f5e400" stroke-width="1.2"/><path d="M2.8 4.3h6.4" stroke="#e00" stroke-width="1.2" stroke-dasharray="1 1"/><rect x="2.1" y="12.6" width="7.8" height="2.8" fill="#f3e000"/><path d="M2.3 13.3l1 1 1-1 1 1 1-1 1 1 1-1 1 1" stroke="#e22" stroke-width="0.9" fill="none"/><path d="M2 11.9h8" stroke="#000" stroke-width="0.9"/><rect x="12.2" y="6.6" width="3.6" height="7.2" rx="1.6" fill="#fff000" stroke="#000" stroke-width="1"/><rect x="12.8" y="7.2" width="2.4" height="3" fill="#e00"/></svg>
<div class="t" style="left:288px;top:676px;font-size:11.75px;color:#141428;font-family:'Liberation Sans', sans-serif;">Metronidazole (Metronidazole oral suspension)</div>
<div class="t" style="left:671px;top:676px;font-size:11.75px;color:#141428;font-family:'Liberation Sans', sans-serif;">mg, Oral Suspension, oral, THREE times a day, Duration: 3 | day(s)</div>
<div style="position:absolute;left:196px;top:692px;width:879px;height:1px;background:#d6d6d6"></div>
<svg style="position:absolute;left:199px;top:695px;" width="12" height="12" viewBox="0 0 12 12"><rect x="0" y="0" width="12" height="12" fill="#fff"/><path d="M0.5 12V0.5H12" stroke="#9a9a9a" fill="none"/><path d="M1.5 11V1.5H11" stroke="#000" fill="none"/><path d="M11.5 1V11.5H1" stroke="#c4c4c4" fill="none"/></svg>
<svg style="position:absolute;left:264px;top:693px;" width="17" height="17" viewBox="0 0 17 17"><rect x="0.6" y="0.6" width="10.8" height="2.4" fill="#fff" stroke="#000" stroke-width="1.2"/><rect x="1.4" y="3" width="9.2" height="13" fill="#fff" stroke="#000" stroke-width="1.3"/><path d="M2.3 4.3h7.4" stroke="#f5e400" stroke-width="1.2"/><path d="M2.8 4.3h6.4" stroke="#e00" stroke-width="1.2" stroke-dasharray="1 1"/><rect x="2.1" y="12.6" width="7.8" height="2.8" fill="#f3e000"/><path d="M2.3 13.3l1 1 1-1 1 1 1-1 1 1 1-1 1 1" stroke="#e22" stroke-width="0.9" fill="none"/><path d="M2 11.9h8" stroke="#000" stroke-width="0.9"/><rect x="12.2" y="6.6" width="3.6" height="7.2" rx="1.6" fill="#fff000" stroke="#000" stroke-width="1"/><rect x="12.8" y="7.2" width="2.4" height="3" fill="#e00"/></svg>
<div class="t" style="left:288px;top:694px;font-size:11.75px;color:#141428;font-family:'Liberation Sans', sans-serif;">Phenoxymethylpenicillin</div>
<div class="t" style="left:671px;top:694px;font-size:11.75px;color:#141428;font-family:'Liberation Sans', sans-serif;">mg, Tablet, oral, FOUR times a day, day(s)</div>
<div style="position:absolute;left:196px;top:710px;width:879px;height:1px;background:#d6d6d6"></div>
<svg style="position:absolute;left:199px;top:713px;" width="12" height="12" viewBox="0 0 12 12"><rect x="0" y="0" width="12" height="12" fill="#fff"/><path d="M0.5 12V0.5H12" stroke="#9a9a9a" fill="none"/><path d="M1.5 11V1.5H11" stroke="#000" fill="none"/><path d="M11.5 1V11.5H1" stroke="#c4c4c4" fill="none"/></svg>
<svg style="position:absolute;left:264px;top:711px;" width="17" height="17" viewBox="0 0 17 17"><rect x="0.6" y="0.6" width="10.8" height="2.4" fill="#fff" stroke="#000" stroke-width="1.2"/><rect x="1.4" y="3" width="9.2" height="13" fill="#fff" stroke="#000" stroke-width="1.3"/><path d="M2.3 4.3h7.4" stroke="#f5e400" stroke-width="1.2"/><path d="M2.8 4.3h6.4" stroke="#e00" stroke-width="1.2" stroke-dasharray="1 1"/><rect x="2.1" y="12.6" width="7.8" height="2.8" fill="#f3e000"/><path d="M2.3 13.3l1 1 1-1 1 1 1-1 1 1 1-1 1 1" stroke="#e22" stroke-width="0.9" fill="none"/><path d="M2 11.9h8" stroke="#000" stroke-width="0.9"/><rect x="12.2" y="6.6" width="3.6" height="7.2" rx="1.6" fill="#fff000" stroke="#000" stroke-width="1"/><rect x="12.8" y="7.2" width="2.4" height="3" fill="#e00"/></svg>
<div class="t" style="left:288px;top:712px;font-size:11.75px;color:#141428;font-family:'Liberation Sans', sans-serif;">Sodium fluoride (d00428) (Sodium Fluoride 1.1% dental</div>
<div class="t" style="left:288px;top:727px;font-size:11.75px;color:#141428;font-family:'Liberation Sans', sans-serif;">paste 5000ppm)</div>
<div class="t" style="left:671px;top:712px;font-size:11.75px;color:#141428;font-family:'Liberation Sans', sans-serif;">1 application, topical, TWICE a day, Duration: 5 | day(s)</div>
<div style="position:absolute;left:196px;top:745px;width:879px;height:1px;background:#d6d6d6"></div>
<svg style="position:absolute;left:199px;top:748px;" width="12" height="12" viewBox="0 0 12 12"><rect x="0" y="0" width="12" height="12" fill="#fff"/><path d="M0.5 12V0.5H12" stroke="#9a9a9a" fill="none"/><path d="M1.5 11V1.5H11" stroke="#000" fill="none"/><path d="M11.5 1V11.5H1" stroke="#c4c4c4" fill="none"/></svg>
<svg style="position:absolute;left:264px;top:746px;" width="17" height="17" viewBox="0 0 17 17"><rect x="0.6" y="0.6" width="10.8" height="2.4" fill="#fff" stroke="#000" stroke-width="1.2"/><rect x="1.4" y="3" width="9.2" height="13" fill="#fff" stroke="#000" stroke-width="1.3"/><path d="M2.3 4.3h7.4" stroke="#f5e400" stroke-width="1.2"/><path d="M2.8 4.3h6.4" stroke="#e00" stroke-width="1.2" stroke-dasharray="1 1"/><rect x="2.1" y="12.6" width="7.8" height="2.8" fill="#f3e000"/><path d="M2.3 13.3l1 1 1-1 1 1 1-1 1 1 1-1 1 1" stroke="#e22" stroke-width="0.9" fill="none"/><path d="M2 11.9h8" stroke="#000" stroke-width="0.9"/><rect x="12.2" y="6.6" width="3.6" height="7.2" rx="1.6" fill="#fff000" stroke="#000" stroke-width="1"/><rect x="12.8" y="7.2" width="2.4" height="3" fill="#e00"/></svg>
<div class="t" style="left:288px;top:747px;font-size:11.75px;color:#141428;font-family:'Liberation Sans', sans-serif;">Sodium fluoride (d00428) (Sodium Fluoride 0.619%</div>
<div class="t" style="left:288px;top:762px;font-size:11.75px;color:#141428;font-family:'Liberation Sans', sans-serif;">dental paste 2800ppm)</div>
<div class="t" style="left:671px;top:747px;font-size:11.75px;color:#141428;font-family:'Liberation Sans', sans-serif;">1 application, topical, TWICE a day, Duration: 5 | day(s)</div>
<div style="position:absolute;left:196px;top:780px;width:879px;height:1px;background:#d6d6d6"></div>
<div style="position:absolute;left:195px;top:864px;width:881px;height:33px;background:#fff;border:1px solid #646464;box-sizing:border-box"></div>
<svg style="position:absolute;left:198px;top:875px;" width="13" height="9" viewBox="0 0 13 9"><rect x="0" y="0" width="13" height="1.5" fill="#8a8a8a"/><path d="M0 9L6.5 2.5L13 9z" fill="#8a8a8a"/></svg>
<div class="t" style="left:216px;top:874px;font-size:12px;font-weight:700;color:#8e8e8e;font-family:'Liberation Sans', sans-serif;-webkit-text-stroke:0;">Details</div>
<div style="position:absolute;left:907px;top:906px;width:80px;height:18px;background:#e1e1e1;border:1px solid #adadad;box-sizing:border-box"></div>
<div class="t" style="left:915px;top:907px;font-size:10.7px;color:#111;font-family:'Liberation Sans', sans-serif;-webkit-text-stroke:0.05px #111;">Plan for Later</div>
<div style="position:absolute;left:995px;top:906px;width:80px;height:18px;background:#e1e1e1;border:1px solid #adadad;box-sizing:border-box"></div>
<div class="t" style="left:1018px;top:907px;font-size:10.9px;color:#111;font-family:'Liberation Sans', sans-serif;-webkit-text-stroke:0.05px #111;">Cancel</div>
<svg style="position:absolute;left:127px;top:157px;" width="64" height="42" viewBox="0 0 64 42"><path d="M21 1C10 1 1 10 1 21s9 20 20 20c9 0 22-9 42-20C43 10 30 1 21 1z" fill="#e60a0a"/></svg>
<div class="t" style="left:133px;top:158px;width:40px;text-align:center;line-height:42px;font-size:23px;color:#fff">10</div>
<svg style="position:absolute;left:127px;top:409px;" width="64" height="42" viewBox="0 0 64 42"><path d="M21 1C10 1 1 10 1 21s9 20 20 20c9 0 22-9 42-20C43 10 30 1 21 1z" fill="#e60a0a"/></svg>
<div class="t" style="left:133px;top:410px;width:40px;text-align:center;line-height:42px;font-size:23px;color:#fff">8</div>
<div style="position:absolute;left:191px;top:163px;width:103px;height:30px;border:5px solid #e60a0a;border-radius:7px;box-sizing:border-box"></div>
<div style="position:absolute;left:191px;top:416px;width:777px;height:28px;border:5px solid #e60a0a;border-radius:7px;box-sizing:border-box"></div>
</body></html>
